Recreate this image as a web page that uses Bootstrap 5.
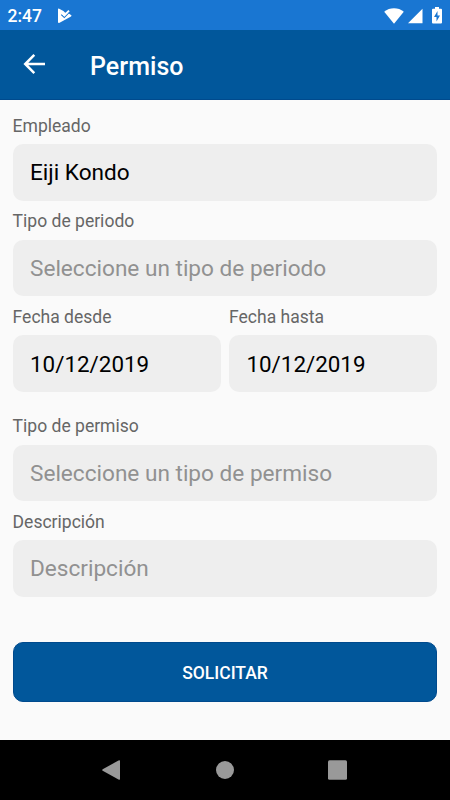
<!DOCTYPE html>
<html lang="es">
<head>
<meta charset="utf-8">
<meta name="viewport" content="width=device-width, initial-scale=1">
<title>Permiso</title>
<link href="https://cdn.jsdelivr.net/npm/bootstrap@5.3.0/dist/css/bootstrap.min.css" rel="stylesheet">
<style>
  body { font-family: Roboto, "Liberation Sans", sans-serif; background: #fafafa; height: 800px; overflow: hidden; }
  .status-bar { height: 30px; background: #1976d2; font-size: 17.5px; line-height: 20px; padding: 1px 7.7px 0 7.5px; font-weight: 500; }
  .app-bar { height: 70px; background: #01579b; border-bottom: 1px solid #004a8d; padding: 3px 23px 0; }
  .app-title { font-size: 25px; line-height: 30px; font-weight: 500; margin-left: 45px; padding-top: 2px; letter-spacing: .05px; }
  .request-form { padding: 5px 12.6px 0; }
  .form-label { height: 39px; line-height: 20px; padding-top: 10.7px; margin: 0; font-size: 17.55px; color: #666; }
  .form-control, .form-control:focus { height: 56.5px; padding: 1.2px 17.4px 0; border: 0; border-radius: 10px; background: #eee; font-size: 22.6px; line-height: 28px; color: #000; box-shadow: none; }
  .form-control::placeholder { color: #919191; opacity: 1; }
  .dates { --bs-gutter-x: 8px; }
  .dates .form-control { font-size: 22.4px; }
  .after-dates { margin-top: 14px; }
  .btn-request { height: 60px; margin-top: 45px; padding: 3px 0 0; border: 1px solid #004a8d; border-radius: 10px; background: #01579b; color: #fff; font-size: 17.5px; font-weight: 500; }
  .nav-keys { height: 60px; background: #000; }
  .battery { margin-left: 9px; }
  .back-arrow { margin-top: -4px; }
  svg { display: block; flex: none; }
</style>
</head>
<body class="d-flex flex-column">
<header class="text-white">
  <div class="status-bar d-flex align-items-center">
    <span>2:47</span>
    <svg class="ms-3" width="15" height="16" viewBox="0 0 15 16"><path d="M0 1.4Q0 .2 1.2.8L5.4 3 7.2 4.8 9.3 4.6 13 7Q14.2 7.8 13 8.6L1.6 14.8Q0 15.2 0 14Z" fill="#fff"/><path d="M3.3 6.6 6.3 9.5 11.2 4.3" fill="none" stroke="#1976d2" stroke-width="1.2"/><path d="M4.2 5.2 6.4 7.4 11 2.6" fill="none" stroke="#fff" stroke-width="1.9"/></svg>
    <svg class="ms-auto" width="20" height="16" viewBox="0 0 20 16"><path d="M.2 3.8C5.8-.8 14.2-.8 19.8 3.8L10 15.8Z" fill="#fff"/></svg>
    <svg class="ms-1" width="15" height="16" viewBox="0 0 15 16"><path d="M14.5.8V15.2H0Z" fill="#fff"/></svg>
    <svg class="battery" width="10" height="17" viewBox="0 0 10 17"><path d="M3 0H7V1.7H9Q10 1.7 10 2.7V15.5Q10 16.5 9 16.5H1Q0 16.5 0 15.5V2.7Q0 1.7 1 1.7H3Z" fill="#fff"/><path d="M5.5 4 2 10H4.5V14.5L8 8.5H5.5Z" fill="#1976d2"/></svg>
  </div>
  <div class="app-bar d-flex align-items-center">
    <svg class="back-arrow" width="22" height="22" viewBox="0 0 22 22"><path d="M22 11H2.8M11.3 1.8 2.2 11 11.3 20.2" fill="none" stroke="#fff" stroke-width="2.5"/></svg>
    <h1 class="app-title mb-0">Permiso</h1>
  </div>
</header>
<form class="request-form flex-grow-1">
  <div><label class="form-label d-block" for="emp">Empleado</label><input id="emp" class="form-control" value="Eiji Kondo"></div>
  <div><label class="form-label d-block" for="per">Tipo de periodo</label><input id="per" class="form-control" placeholder="Seleccione un tipo de periodo"></div>
  <div class="row dates">
    <div class="col-6"><label class="form-label d-block" for="from">Fecha desde</label><input id="from" class="form-control" value="10/12/2019"></div>
    <div class="col-6"><label class="form-label d-block" for="to">Fecha hasta</label><input id="to" class="form-control" value="10/12/2019"></div>
  </div>
  <div class="after-dates"><label class="form-label d-block" for="kind">Tipo de permiso</label><input id="kind" class="form-control" placeholder="Seleccione un tipo de permiso"></div>
  <div><label class="form-label d-block" for="desc">Descripción</label><input id="desc" class="form-control" placeholder="Descripción"></div>
  <button type="button" class="btn btn-request w-100">SOLICITAR</button>
</form>
<nav class="nav-keys">
  <svg width="450" height="60" viewBox="0 0 450 60" fill="#999"><path d="M118.5 20.5Q120 19.7 120 21V39Q120 40.3 118.5 39.5L102.7 30.8Q101.7 30 102.7 29.2Z"/><circle cx="225" cy="30" r="9"/><rect x="328" y="20.3" width="19" height="19.4" rx="1.5"/></svg>
</nav>
<script src="https://cdn.jsdelivr.net/npm/bootstrap@5.3.0/dist/js/bootstrap.bundle.min.js"></script>
</body>
</html>
